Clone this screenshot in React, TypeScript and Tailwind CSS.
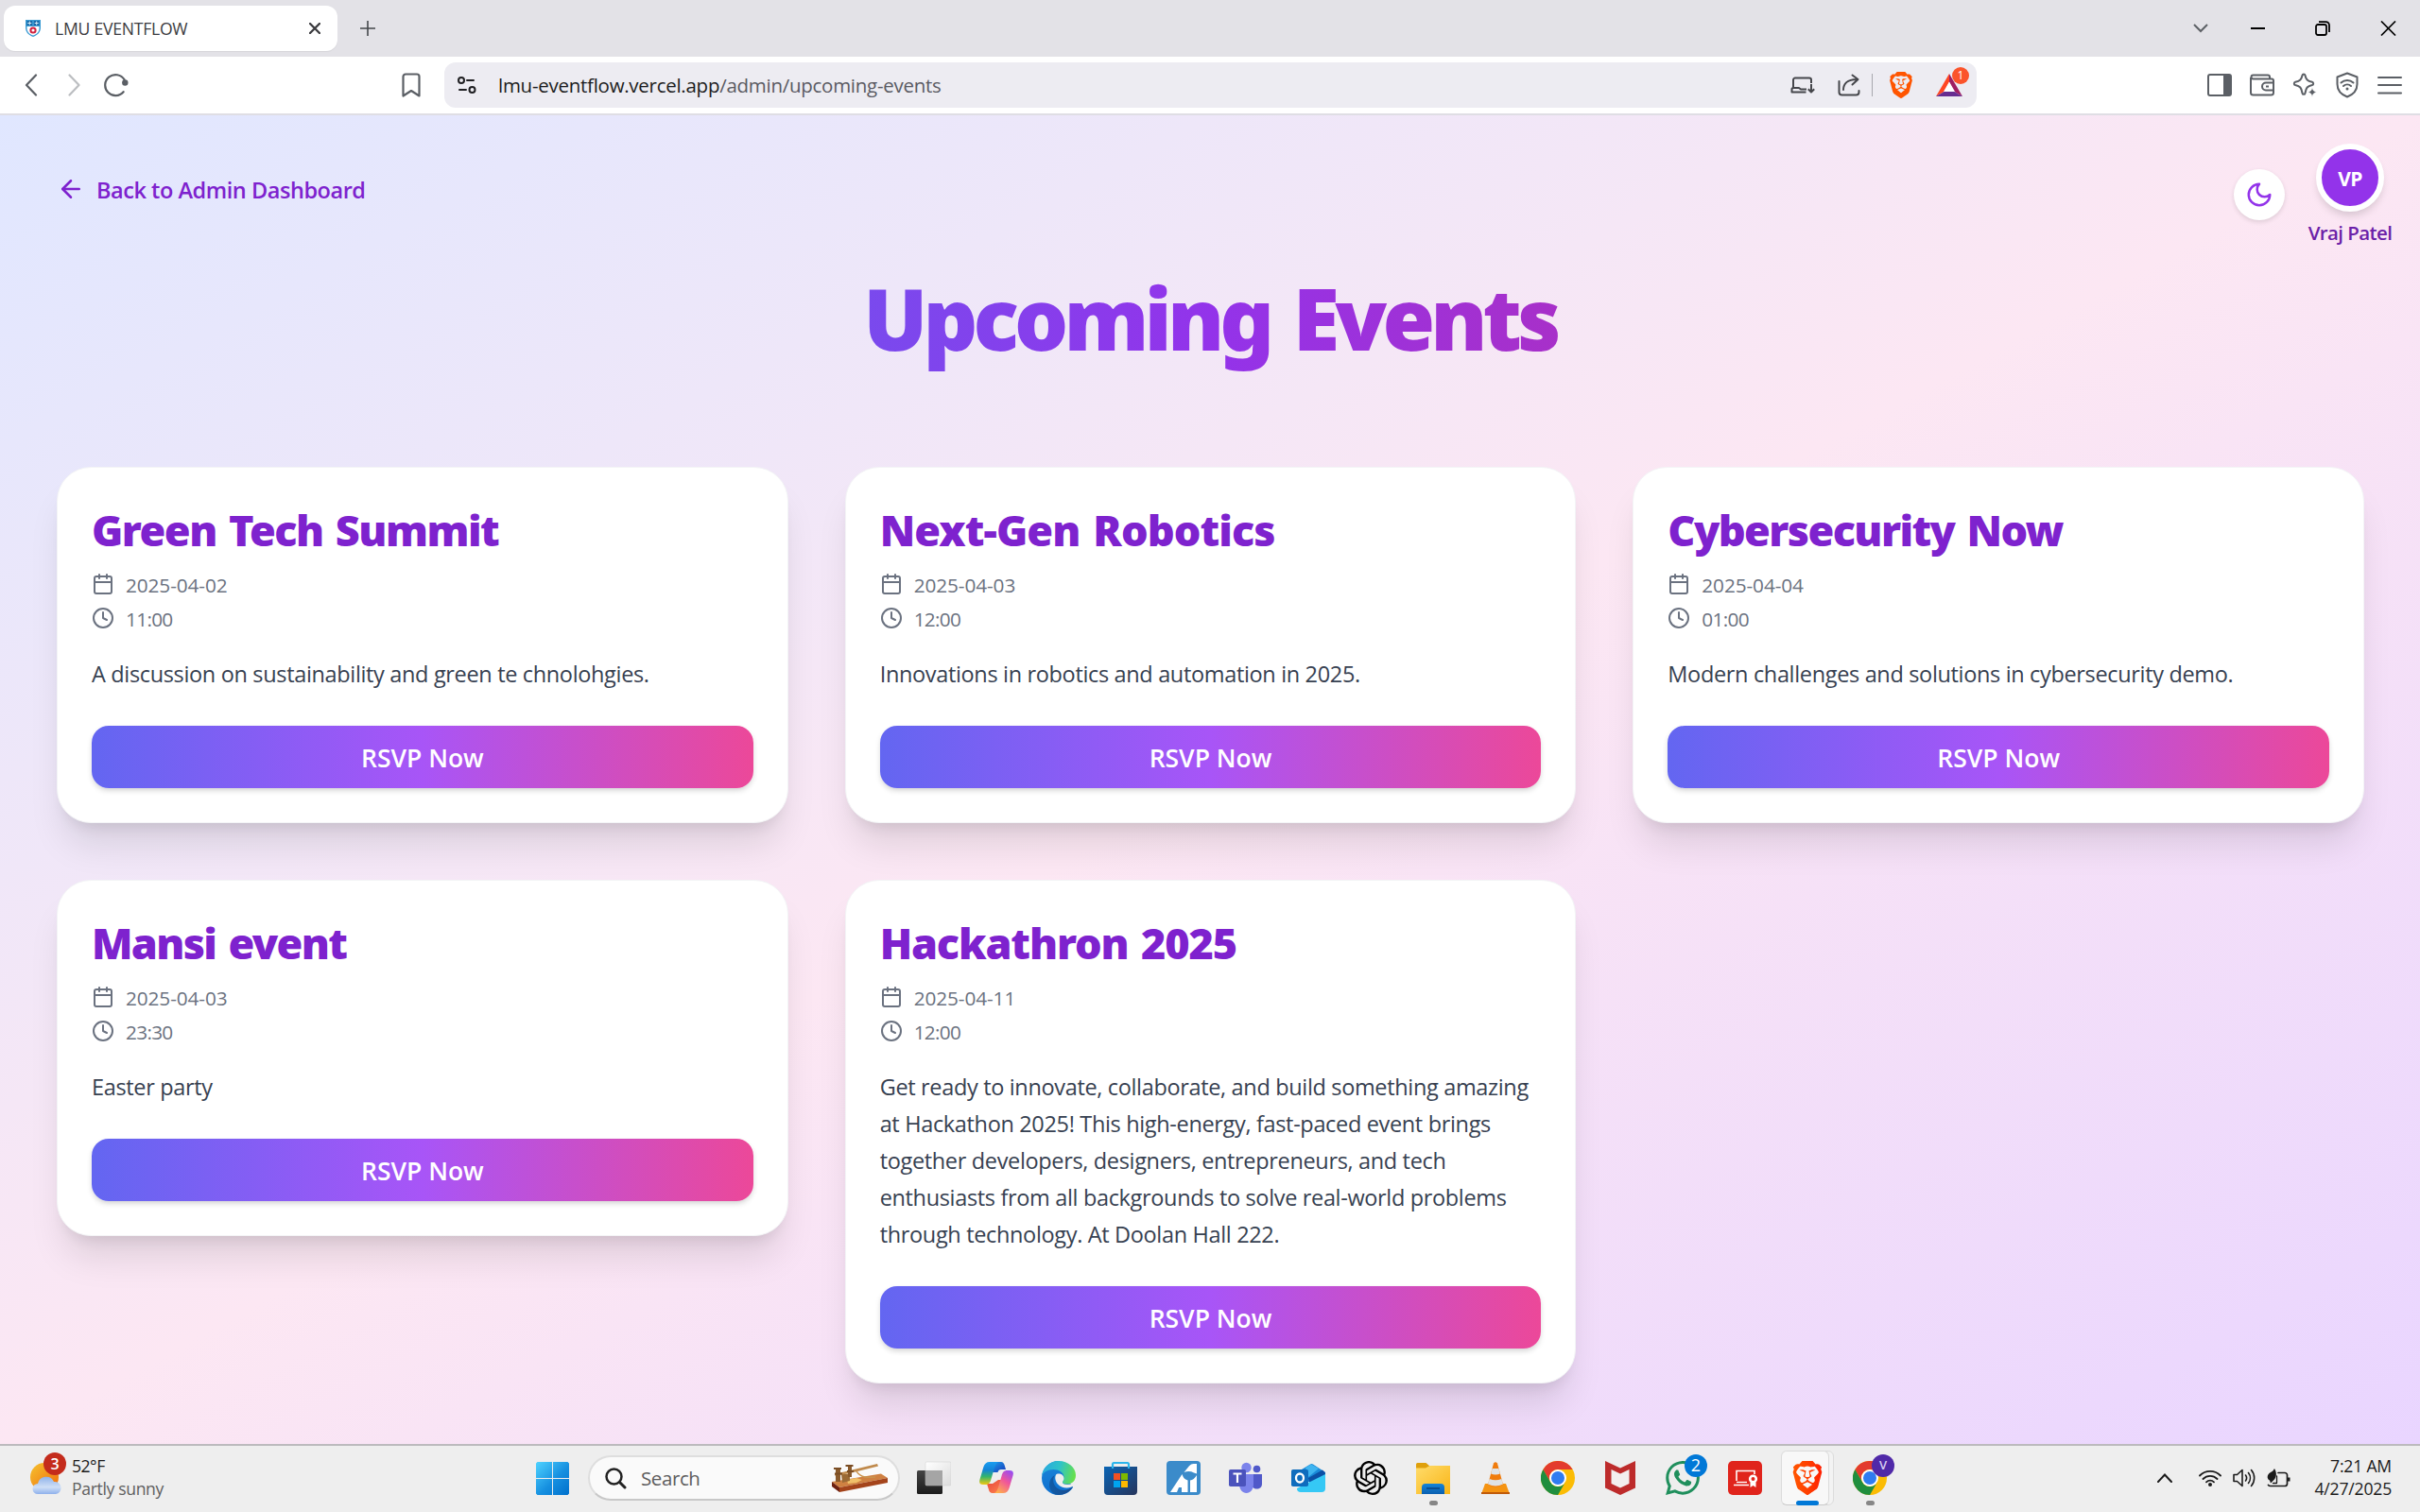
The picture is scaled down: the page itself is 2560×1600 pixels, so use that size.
import type { ReactNode } from "react";
import { ArrowLeft, Calendar, Clock } from "lucide-react";
import { SiBrave, SiOpenai, SiWhatsapp } from "react-icons/si";

type EventItem = {
  title: string;
  date: string;
  time: string;
  description: string;
  tracking: string;
};

const events: EventItem[] = [
  { title: "Green Tech Summit", date: "2025-04-02", time: "11:00", description: "A discussion on sustainability and green te chnolohgies.", tracking: "tracking-[-1.5px]" },
  { title: "Next-Gen Robotics", date: "2025-04-03", time: "12:00", description: "Innovations in robotics and automation in 2025.", tracking: "tracking-[-0.9px]" },
  { title: "Cybersecurity Now", date: "2025-04-04", time: "01:00", description: "Modern challenges and solutions in cybersecurity demo.", tracking: "tracking-[-1.6px]" },
  { title: "Mansi event", date: "2025-04-03", time: "23:30", description: "Easter party", tracking: "tracking-[-1.65px]" },
  { title: "Hackathron 2025", date: "2025-04-11", time: "12:00", description: "Get ready to innovate, collaborate, and build something amazing at Hackathon 2025! This high-energy, fast-paced event brings together developers, designers, entrepreneurs, and tech enthusiasts from all backgrounds to solve real-world problems through technology. At Doolan Hall 222.", tracking: "tracking-[-1.15px]" },
];

/* ---------- Browser chrome ---------- */

function TabStrip() {
  return (
    <div className="flex h-[60px] items-center bg-[#e3e2e7] pl-1">
      <div className="flex h-12 w-[353px] items-center rounded-xl bg-white pl-[23px] pr-[18px] shadow-[0_1px_1px_rgba(0,0,0,0.06)]">
        <svg width="16" height="18" viewBox="0 0 16 18">
          <path d="M0 0h16v8c0 5-3 8-8 10C3 16 0 13 0 8z" fill="#3a9bd3" />
          <path d="M1.500 7h13v1.500c0 4-2.500 6.500-6.500 8.100C4 15 1.500 12.500 1.500 8.500z" fill="#fff" />
          <path d="M1.500 1h5.600v5H1.500zM8.900 1h5.600v5H8.900z" fill="#1668a8" />
          <path d="M4.300 1.500v4M2.300 3.500h4M11.700 1.500v4M9.700 3.500h4" stroke="#d7ecf8" strokeWidth="1" />
          <circle cx="8" cy="11" r="2.600" fill="none" stroke="#d0213f" strokeWidth="2" />
        </svg>
        <span className="ml-[15px] grow text-[17.600px] tracking-[-0.25px] text-[#3b3b40]">LMU EVENTFLOW</span>
        <svg width="12" height="12" viewBox="0 0 12 12" stroke="#3b3b3f" strokeWidth="2.300" strokeLinecap="round">
          <path d="M1 1l10 10M11 1L1 11" />
        </svg>
      </div>
      <svg className="ml-6" width="16" height="16" viewBox="0 0 16 16" stroke="#44474b" strokeWidth="1.600">
        <path d="M8 0v16M0 8h16" />
      </svg>
      <div className="ml-auto flex items-center pr-[25px]">
        <svg width="16" height="10" viewBox="0 0 16 10" fill="none" stroke="#5d6166" strokeWidth="2">
          <path d="M1 1l7 7 7-7" />
        </svg>
        <svg className="ml-[45px]" width="15" height="2" viewBox="0 0 15 2"><path d="M0 0h15v2H0z" /></svg>
        <svg className="ml-[53px]" width="16" height="16" viewBox="0 0 16 16" fill="none" stroke="#000" strokeWidth="1.800">
          <rect x="1" y="4" width="11" height="11" rx="2" />
          <path d="M4 1.200h7.500A3.500 3.500 0 0 1 15 4.700V12" />
        </svg>
        <svg className="ml-[53px]" width="17" height="16" viewBox="0 0 17 16" stroke="#000" strokeWidth="1.700">
          <path d="M1 .5l15 15M16 .5L1 15.500" />
        </svg>
      </div>
    </div>
  );
}

function BatIcon() {
  return (
    <span className="relative block h-6 w-7">
      <svg width="28" height="24" viewBox="0 0 28 24">
        <path d="M14 0L0 24l8.500-5L14 9z" fill="#ff4724" />
        <path d="M14 0l14 24-8.500-5L14 9z" fill="#9e1f63" />
        <path d="M0 24h28l-8.500-5h-11z" fill="#662d91" />
        <path d="M14 8.500l6 10.500H8z" fill="#fff" />
      </svg>
      <span className="absolute -top-[7px] left-[17px] flex size-[18px] items-center justify-center rounded-full bg-[#fb542b] text-[12px] text-white">1</span>
    </span>
  );
}

function Toolbar() {
  return (
    <div className="flex h-[62px] items-center border-b-2 border-[#dfdee4] bg-white pl-[26px] pr-[19px]">
      <svg width="14" height="24" viewBox="0 0 14 24" fill="none" stroke="#5b5f65" strokeWidth="2.200" strokeLinecap="round" strokeLinejoin="round">
        <path d="M12 1.500L2 12l10 10.500" />
      </svg>
      <svg className="ml-8" width="14" height="24" viewBox="0 0 14 24" fill="none" stroke="#bcbec1" strokeWidth="2.200" strokeLinecap="round" strokeLinejoin="round">
        <path d="M1.500 1.500L11.500 12l-10 10.500" />
      </svg>
      <svg className="ml-6" width="26" height="26" viewBox="0 0 26 26" fill="none" stroke="#5b5f65" strokeWidth="2.200" strokeLinecap="round">
        <path d="M20.600 20.200A11 11 0 1 1 21.500 7.200" />
        <circle cx="22.300" cy="10.500" r="3.200" fill="#5b5f65" stroke="none" />
      </svg>
      <svg className="ml-[289px]" width="20" height="26" viewBox="0 0 20 26" fill="none" stroke="#5b5f65" strokeWidth="2.200" strokeLinejoin="round">
        <path d="M1.500 4a2.500 2.500 0 0 1 2.500-2.500h12A2.500 2.500 0 0 1 18.500 4v20.500L10 19l-8.500 5.500z" />
      </svg>
      <div className="ml-[25px] flex h-12 w-[1621px] items-center rounded-xl bg-[#edecf2] pl-[14px] pr-[15px]">
        <svg width="20" height="18" viewBox="0 0 20 18" fill="none" stroke="#1f1f22" strokeWidth="2" strokeLinecap="round">
          <circle cx="4" cy="4" r="3" />
          <path d="M10 4h7M2 14h7" />
          <circle cx="15.500" cy="14" r="3" />
        </svg>
        <span className="ml-[23px] pt-px text-[20.500px] tracking-[-0.27px] text-[#5a5a62]">
          <span className="text-[#1c1c20]">lmu-eventflow.vercel.app</span>/admin/upcoming-events
        </span>
        <svg className="ml-auto" width="26" height="18" viewBox="0 0 26 18" fill="none" stroke="#45464b" strokeWidth="2" strokeLinejoin="round">
          <path d="M22 7V3.500A2 2 0 0 0 20 1.500H5a2 2 0 0 0-2 2V12M3 11.500L1.500 13v3.500h15M3 12h6l2 1.500h6" />
          <path d="M22 8v8.500M18.800 13.300L22 16.500l3.200-3.200" />
        </svg>
        <svg className="ml-6" width="24" height="24" viewBox="0 0 24 24" fill="none" stroke="#45464b" strokeWidth="2" strokeLinecap="round" strokeLinejoin="round">
          <path d="M1.500 8v11.500a3 3 0 0 0 3 3h15a3 3 0 0 0 3-3V18" />
          <path d="M6 17c0-6 4-11 14-11M15.500 1.500L21.500 6l-6 5.500" />
        </svg>
        <span className="ml-3 h-6 w-px bg-[#a7a8ad]" />
        <SiBrave className="ml-4 text-[#ff5500]" size={28} />
        <span className="ml-[23px]"><BatIcon /></span>
      </div>
      <div className="ml-auto flex items-center gap-[19px]">
        <svg width="26" height="24" viewBox="0 0 26 24">
          <rect x="1" y="1" width="24" height="22" rx="2" fill="none" stroke="#5b5f65" strokeWidth="2" />
          <path d="M17 1h7v22h-7z" fill="#5b5f65" />
        </svg>
        <svg width="26" height="24" viewBox="0 0 26 24" fill="none" stroke="#5b5f65" strokeWidth="2">
          <path d="M25 8.500V20a2.500 2.500 0 0 1-2.500 2.500h-19A2.500 2.500 0 0 1 1 20V4M25 9V7.500A2 2 0 0 0 23 5.500H3.500A2 2 0 0 1 3.500 1.500H19a2 2 0 0 1 2 2v2" />
          <path d="M25 9.500h-8a4 4 0 0 0 0 8h8zM17 13.500h3" />
        </svg>
        <svg width="26" height="26" viewBox="0 0 26 26" fill="none" stroke="#5b5f65" strokeWidth="2" strokeLinejoin="round">
          <path d="M12 1.500c.8 0 1.300.5 1.500 1.300.9 4.300 2.400 5.800 7.400 7 1.700.5 1.700 2.700 0 3.200-5 1.200-6.500 2.700-7.400 8.500-.3 1.800-2.700 1.800-3 0-.9-5.800-2.400-7.300-7.400-8.500-1.700-.5-1.700-2.700 0-3.200 5-1.200 6.500-2.700 7.400-7C10.700 2 11.200 1.500 12 1.500z" />
          <path d="M21 15.500c.8 3.400 1.600 4.200 5 5-3.400.8-4.200 1.600-5 5-.8-3.400-1.600-4.200-5-5 3.400-.8 4.200-1.600 5-5z" fill="#5b5f65" stroke="#fff" strokeWidth=".6" />
        </svg>
        <svg width="26" height="28" viewBox="0 0 26 28" fill="none" stroke="#5b5f65" strokeWidth="2" strokeLinecap="round" strokeLinejoin="round">
          <path d="M13 1.500L23.500 5.500V13c0 6.500-4 11-10.500 13.500C6.500 24 2.500 19.500 2.500 13V5.500z" />
          <path d="M6.500 11.500a9.500 9.500 0 0 1 13 0M9 15a6 6 0 0 1 8 0" />
          <circle cx="13" cy="18" r="1.500" fill="#5b5f65" stroke="none" />
        </svg>
        <svg width="26" height="20" viewBox="0 0 26 20" stroke="#5b5f65" strokeWidth="2" strokeLinecap="round">
          <path d="M1 2h24M1 10h24M1 18.500h24" />
        </svg>
      </div>
    </div>
  );
}

/* ---------- Page ---------- */

function PageHeader() {
  return (
    <header className="flex h-[152px] items-start pl-[60px] pr-[29px] pt-[30px] text-[#7e22ce]">
      <a className="mt-[30px] flex h-9 items-center gap-3">
        <ArrowLeft size={30} strokeWidth={2} />
        <span className="pt-[3px] text-[23.500px] font-semibold tracking-[-0.45px]">Back to Admin Dashboard</span>
      </a>
      <div className="ml-auto flex items-start gap-6">
        <button className="mt-[27px] flex size-[54px] items-center justify-center rounded-full bg-white text-[#9333ea] shadow-[0_2px_5px_rgba(0,0,0,0.12)]">
          <svg width="30" height="30" viewBox="0 0 24 24" fill="none" stroke="currentColor" strokeWidth="2" strokeLinecap="round" strokeLinejoin="round">
            <path d="M12 3a6 6 0 0 0 9 9 9 9 0 1 1-9-9Z" />
          </svg>
        </button>
        <div className="flex w-[90px] flex-col items-center">
          <div className="flex size-[72px] items-center justify-center rounded-full border-[6px] border-white bg-[#9333ea] pt-[3px] text-[21px] font-bold tracking-[-0.6px] text-white shadow-[0_6px_9px_-2px_rgba(0,0,0,0.15)]">VP</div>
          <span className="mt-[7px] whitespace-nowrap text-[20.500px] font-semibold leading-[30px] tracking-[-0.6px] text-[#6b21a8]">Vraj Patel</span>
        </div>
      </div>
    </header>
  );
}

function EventCard({ event }: { event: EventItem }) {
  return (
    <article className="rounded-[36px] border border-[#f3f4f6] bg-white p-9 shadow-[0_30px_37.500px_-7.500px_rgba(0,0,0,0.1),0_12px_15px_-9px_rgba(0,0,0,0.1)]">
      <h2 className={`h-[54px] pt-[3px] font-['Noto_Sans',sans-serif] text-[45px] font-black leading-[54px] text-[#7e22ce] [word-spacing:3px] ${event.tracking}`}>{event.title}</h2>
      <div className="mt-[18px] flex h-[30px] items-center gap-3 text-[#6b7280]">
        <Calendar size={24} />
        <span className="pt-[3px] text-[20.800px] tracking-[-0.1px]">{event.date}</span>
      </div>
      <div className="mt-1.5 flex h-[30px] items-center gap-3 text-[#6b7280]">
        <Clock size={24} />
        <span className="pt-[3px] text-[20.800px] tracking-[-0.7px]">{event.time}</span>
      </div>
      <p className="mt-[25px] text-[23.500px] leading-[39px] tracking-[-0.34px] text-[#374151]">{event.description}</p>
      <button className="mt-[35px] h-[66px] w-full rounded-[18px] bg-[linear-gradient(to_right,#6366f1,#a855f7,#ec4899)] pt-[3px] text-[26.500px] font-semibold text-white shadow-[0_3px_6px_-1px_rgba(0,0,0,0.2)]">RSVP Now</button>
    </article>
  );
}

/* ---------- Taskbar ---------- */

const appSvg = { width: 36, height: 36, viewBox: "0 0 36 36", className: "block" };

function StartIcon() {
  return (
    <svg width="35" height="35" viewBox="0 0 35 35">
      <defs>
        <linearGradient id="win" x1="0" y1="0" x2="35" y2="35" gradientUnits="userSpaceOnUse">
          <stop stopColor="#4fd3ff" />
          <stop offset=".55" stopColor="#1690e0" />
          <stop offset="1" stopColor="#0070cc" />
        </linearGradient>
      </defs>
      <path fill="url(#win)" d="M1.500 0H17v17H0V1.500zM18 0h15.500L35 1.500V17H18zM0 18h17v17H1.500L0 33.500zM18 18h17v15.500L33.500 35H18z" />
    </svg>
  );
}

function TelegraphPicture() {
  return (
    <svg width="60" height="30" viewBox="0 0 60 30">
      <path d="M0 19L52 10.500l7 4.500-51 10z" fill="#cf8142" />
      <path d="M16 17l10-2 6 2-6 3-9 1z" fill="#f0c069" />
      <path d="M0 19l8 6v5l-8-6z" fill="#6e2010" />
      <path d="M8 25l51-10v5L8 30z" fill="#a4441b" />
      <path d="M10 11h9v7l-8 2z" fill="#9b6a35" />
      <path d="M3 10.500l10-2L48 0l1 2.500-32 8-14 2z" fill="#c08a4c" />
      <path d="M4 5h5v14H4zM17 2h4v12h-4z" fill="#8a5a2c" />
      <path d="M2 5h8M14.500 2h8M3 10.500h8M16 8h7" stroke="#7a4d24" strokeWidth="2" />
      <path d="M26 8c5 7 12 7 20 6" fill="none" stroke="#c9944f" strokeWidth="1.300" />
    </svg>
  );
}

function TaskViewIcon() {
  return (
    <svg {...appSvg}>
      <defs>
        <linearGradient id="tv1" x1="0" y1="0" x2="0" y2="1"><stop stopColor="#444" /><stop offset="1" stopColor="#1c1c1c" /></linearGradient>
        <linearGradient id="tv2" x1="0" y1="0" x2="1" y2="1"><stop stopColor="#fff" /><stop offset="1" stopColor="#dcdcdc" /></linearGradient>
      </defs>
      <rect x="0" y="10" width="27" height="25" rx="1.500" fill="url(#tv1)" />
      <rect x="9" y="1" width="27" height="25" rx="1.500" fill="url(#tv2)" stroke="#cfcfcf" strokeWidth=".5" />
      <path d="M9 10h18v16H9z" fill="#a5a5a5" />
    </svg>
  );
}

function CopilotIcon() {
  return (
    <svg {...appSvg}>
      <defs>
        <linearGradient id="cp1" x1="0" y1="0" x2="0" y2="1"><stop stopColor="#1a9df0" /><stop offset=".35" stopColor="#1284d8" /><stop offset=".65" stopColor="#35b56a" /><stop offset="1" stopColor="#f2c80f" /></linearGradient>
        <linearGradient id="cp2" x1=".8" y1="0" x2=".2" y2="1"><stop stopColor="#9a4df0" /><stop offset=".45" stopColor="#f0569a" /><stop offset="1" stopColor="#ffb04a" /></linearGradient>
        <linearGradient id="cp3" x1="0" y1="0" x2="1" y2="1"><stop stopColor="#20a4ee" /><stop offset="1" stopColor="#1436b8" /></linearGradient>
        <linearGradient id="cp4" x1="0" y1="0" x2="1" y2="1"><stop stopColor="#e8453c" /><stop offset="1" stopColor="#ff8a50" /></linearGradient>
      </defs>
      <path d="M12 1h11c2 0 3 1.500 3.500 3l1.500 5h-5c-2 0-3 1-3.500 3L13 12z" fill="url(#cp3)" />
      <path d="M24 34H14c-2.500 0-3.500-1.500-4-3.500L8 24h6l6-4h8z" fill="url(#cp4)" />
      <path d="M11 1h9c-2 1-3 3-4 6l-3.500 12c-1 4-2.500 6-6 6H4c-3.500 0-4.500-2-3.500-5.500L4.500 6c1-3 3-5 6.500-5z" fill="url(#cp1)" />
      <path d="M25 34h-9c2-1 3-3 4-6l3.500-12c1-4 2.500-6 6-6H32c3.500 0 4.500 2 3.500 5.500L31.500 29c-1 3-3 5-6.500 5z" fill="url(#cp2)" />
    </svg>
  );
}

function EdgeIcon() {
  return (
    <svg {...appSvg}>
      <defs>
        <linearGradient id="ed1" x1="0" y1=".3" x2="1" y2=".5"><stop stopColor="#2aa9e0" /><stop offset=".5" stopColor="#2fc3c8" /><stop offset="1" stopColor="#66e04a" /></linearGradient>
        <linearGradient id="ed2" x1="0" y1="0" x2="0" y2="1"><stop stopColor="#1b86d8" /><stop offset="1" stopColor="#0d6fd0" /></linearGradient>
        <linearGradient id="ed3" x1="0" y1="0" x2="1" y2="0"><stop stopColor="#0f5ca8" /><stop offset="1" stopColor="#1b4a8c" /></linearGradient>
      </defs>
      <path d="M18 0a18 18 0 1 0 0 36c6 0 12-3 15-8L24 14z" fill="url(#ed2)" />
      <path d="M0 16C1 7 8 0 18 0s18 7 18 15c0 6-4 9.500-9 9.500-4 0-5-1.500-5-2.500 0-1.200 1.500-1.800 1.500-4.500C23.500 12 18 9 12.500 9 6 9 1.500 12 0 16z" fill="url(#ed1)" />
      <path d="M14 15c-3 4-2 10 2 13.500 5 4 12 3 17-1.500-3 5.500-8.500 9-15 9-6 0-10-5-10-10.500 0-5 2.500-9 6-10.500z" fill="url(#ed3)" />
      <path d="M15.500 14c4.500-1.500 8 1 8 4.500 0 2-1.500 2.500-1.500 4s1.500 2.500 5 2.500c3 0 5.500-1 7-2 .3 1-1 4-2.500 4.500-5 2-11 1-14.500-3-3-3.500-3.500-8-1.500-10.500z" fill="#eee" />
    </svg>
  );
}

function StoreIcon() {
  return (
    <svg {...appSvg}>
      <defs>
        <linearGradient id="st" x1="0" y1="0" x2="1" y2="1"><stop stopColor="#0a64b4" /><stop offset="1" stopColor="#26355c" /></linearGradient>
      </defs>
      <path d="M0 6h35v26a4 4 0 0 1-4 4H4a4 4 0 0 1-4-4z" fill="url(#st)" />
      <path d="M9 8V4A1.800 1.800 0 0 1 10.500 2h14a1.800 1.800 0 0 1 1.500 2v4" fill="none" stroke="#2cb5ec" strokeWidth="2.200" />
      <path d="M10 13h7v7h-7z" fill="#f25022" />
      <path d="M18 13h7v7h-7z" fill="#7fba00" />
      <path d="M10 21h7v7h-7z" fill="#00a4ef" />
      <path d="M18 21h7v7h-7z" fill="#ffb900" />
    </svg>
  );
}

function AiIcon() {
  return (
    <svg {...appSvg}>
      <rect width="36" height="36" rx="4" fill="#3b8bca" />
      <path d="M4 33L16.500 14c1 3.500 2.500 5.500 6 6.500V33h-6.500v-5h-3L11 33z" fill="#fff" />
      <path d="M18.500 12L24 5.200Q26 3 28.500 3H32v10.500l-3-1q-5-2.500-10.500-.5z" fill="#fff" />
      <path d="M25 20.500q4-.5 7-5.500v18h-7z" fill="#fff" />
    </svg>
  );
}

function TeamsIcon() {
  return (
    <svg {...appSvg}>
      <circle cx="18.500" cy="7" r="5.200" fill="#7b83eb" />
      <circle cx="29.500" cy="8.500" r="3.800" fill="#5059c9" />
      <path d="M24 14h11v10c0 4-2.500 5.500-5.500 5.500S24 28 24 24z" fill="#5059c9" />
      <path d="M11 14h15v11c0 5-3.500 9-7.500 9S11 30 11 25z" fill="#7b83eb" />
      <rect x="0" y="9" width="18" height="18" rx="1.800" fill="#4b53bc" />
      <path d="M4.500 13.500h9M9 13.500V23" stroke="#fff" strokeWidth="2.200" />
    </svg>
  );
}

function OutlookIcon() {
  return (
    <svg {...appSvg}>
      <path d="M6 12L20 3.500q1.500-.8 3 0l13 8.500v6L6 25z" fill="#1a8ad8" />
      <path d="M15 7l6-3.500L29 8l-11 9z" fill="#3fb4f0" />
      <path d="M18 18L33 9.500l3 3v3L20 26z" fill="#0b4fa5" />
      <path d="M36 14v15a4 4 0 0 1-4 4H10a4 4 0 0 1-4-4l12-6z" fill="#35c8f5" />
      <rect x="0" y="9" width="18" height="18" rx="1.800" fill="#0f6cbd" />
      <ellipse cx="9" cy="18" rx="4" ry="4.500" fill="none" stroke="#fff" strokeWidth="2.300" />
    </svg>
  );
}

function ExplorerIcon() {
  return (
    <svg {...appSvg}>
      <defs>
        <linearGradient id="fx" x1="0" y1="0" x2="1" y2="1"><stop stopColor="#ffdc6b" /><stop offset="1" stopColor="#f9b517" /></linearGradient>
        <linearGradient id="fb" x1="0" y1="0" x2="0" y2="1"><stop stopColor="#1584d8" /><stop offset="1" stopColor="#0a5fb0" /></linearGradient>
      </defs>
      <path d="M0 3.500A1.500 1.500 0 0 1 1.500 2h9l4 3.500L10 9H0z" fill="#dfa00c" />
      <path d="M0 7.500h10L14.500 5H36v30H0z" fill="url(#fx)" />
      <path d="M6 35v-7a4 4 0 0 1 4-4h16a4 4 0 0 1 4 4v7z" fill="url(#fb)" />
      <path d="M11 29h14" stroke="#0b4a8c" strokeWidth="1.800" />
    </svg>
  );
}

function VlcIcon() {
  return (
    <svg {...appSvg}>
      <path d="M7 24h22l4 11H3z" fill="#f59412" />
      <path d="M3 33h30v2H3z" fill="#c05a08" />
      <path d="M16 2.500q2-2.500 4 0L26 25q-8 5-16 0z" fill="#f07c0c" />
      <path d="M14.600 8h6.800l1.500 5.500q-4.900 2-9.800 0zM11.600 19q6.400 2.500 12.800 0l1.600 5.500q-8 4-16 0z" fill="#dfe3e6" />
    </svg>
  );
}

function ChromeIcon() {
  return (
    <svg {...appSvg}>
      <circle cx="18" cy="18" r="18" fill="#fbbc04" />
      <path d="M2.400 9A18 18 0 0 1 33.600 9H18a9 9 0 0 0-7.800 13.500z" fill="#e33b2e" />
      <path d="M2.400 9A18 18 0 0 0 18 36l7.800-13.500a9 9 0 0 1-15.600 0z" fill="#1f8e3e" />
      <circle cx="18" cy="18" r="9" fill="#fff" />
      <circle cx="18" cy="18" r="7" fill="#2f7cf0" />
    </svg>
  );
}

function McAfeeIcon() {
  return (
    <svg {...appSvg}>
      <path d="M2 0l16 7.500L34 0v28.500L18 36 2 28.500z" fill="#bd2b2b" />
      <path d="M8.500 9l9.500 4.500L27.500 9v15L18 28.500 8.500 24z" fill="#f3eeee" />
    </svg>
  );
}

function WhatsAppIcon() {
  return (
    <span className="relative block size-9">
      <SiWhatsapp size={36} className="text-[#1f8f5c]" />
      <span className="absolute -top-[7px] left-5 flex size-6 items-center justify-center rounded-full bg-[#0078d7] pb-px text-[18px] text-white">2</span>
    </span>
  );
}

function CertificateIcon() {
  return (
    <svg {...appSvg} fill="none">
      <rect width="36" height="36" rx="5" fill="#e0241c" />
      <path d="M9 21V10.500h19V14M6 25.500h16" stroke="#fff" strokeWidth="1.600" />
      <path d="M9 22.500h11" stroke="#fff" strokeWidth="1.400" />
      <circle cx="26.500" cy="19" r="3.300" stroke="#fff" strokeWidth="2.600" />
      <path d="M23.500 22.500h6V28l-3-2-3 2z" fill="#fff" />
    </svg>
  );
}

function BraveIcon() {
  return (
    <span className="relative -mx-[13px] block h-[58px] w-[62px]">
      <span className="absolute left-[9px] top-0 block h-[58px] w-[50px] rounded-[6px] border border-[#dcdcdc] bg-[#f3f3f3]" />
      <span className="absolute left-[3px] top-0 flex h-[58px] w-[51px] items-center justify-center rounded-[6px] border border-[#dcdcdc] border-b-[#c9c9c9] bg-[#f8f8f8] pl-[5px]">
        <svg width="0" height="0" className="absolute">
          <defs>
            <linearGradient id="brv" x1="0" y1="0" x2="1" y2="0"><stop stopColor="#ff5601" /><stop offset=".5" stopColor="#ff4000" /><stop offset="1" stopColor="#ff1f01" /></linearGradient>
          </defs>
        </svg>
        <SiBrave size={36} fill="url(#brv)" />
      </span>
    </span>
  );
}

function ProfileChromeIcon() {
  return (
    <span className="relative block size-9">
      <ChromeIcon />
      <span className="absolute -top-[7px] left-5 flex size-6 items-center justify-center rounded-full bg-[#5029a8] text-[13px] font-semibold text-[#d9cdf2]">V</span>
    </span>
  );
}

const apps: { name: string; icon: ReactNode; mark?: "open" | "active" }[] = [
  { name: "task-view", icon: <TaskViewIcon /> },
  { name: "copilot", icon: <CopilotIcon /> },
  { name: "edge", icon: <EdgeIcon /> },
  { name: "store", icon: <StoreIcon /> },
  { name: "ai", icon: <AiIcon /> },
  { name: "teams", icon: <TeamsIcon /> },
  { name: "outlook", icon: <OutlookIcon /> },
  { name: "chatgpt", icon: <SiOpenai size={36} color="#000" /> },
  { name: "explorer", icon: <ExplorerIcon />, mark: "open" },
  { name: "vlc", icon: <VlcIcon /> },
  { name: "chrome", icon: <ChromeIcon /> },
  { name: "mcafee", icon: <McAfeeIcon /> },
  { name: "whatsapp", icon: <WhatsAppIcon /> },
  { name: "certificate", icon: <CertificateIcon /> },
  { name: "brave", icon: <BraveIcon />, mark: "active" },
  { name: "chrome-profile", icon: <ProfileChromeIcon />, mark: "open" },
];

function Taskbar() {
  return (
    <footer className="flex h-[72px] items-center border-t-2 border-[#bcbabd] bg-[#eeeeee] pb-0.5 pl-8 pr-[30px] text-[17.600px] text-[#1b1b1b]">
      <div className="flex w-[535px] items-center">
        <span className="relative block h-11 w-9">
          <svg width="36" height="44" viewBox="0 0 36 44">
            <defs>
              <linearGradient id="sun" x1="0" y1="0" x2="1" y2="1"><stop stopColor="#f5c22f" /><stop offset="1" stopColor="#f06a0a" /></linearGradient>
              <linearGradient id="cloud" x1="0" y1="0" x2="0" y2="1"><stop stopColor="#8fb2ea" /><stop offset=".6" stopColor="#cfdff6" /><stop offset="1" stopColor="#8eb0ec" /></linearGradient>
            </defs>
            <circle cx="15" cy="21" r="15" fill="url(#sun)" />
            <path d="M8 39a5.500 5.500 0 0 1 0-11 9 9 0 0 1 17-2 6.500 6.500 0 0 1 2 13z" fill="url(#cloud)" />
          </svg>
          <span className="absolute -top-[5px] left-3.5 flex size-6 items-center justify-center rounded-full bg-[#c42b1c] text-[16px] font-semibold text-white">3</span>
        </span>
        <div className="ml-2 flex flex-col pb-0.5 leading-6">
          <span className="tracking-[-0.5px]">52°F</span>
          <span className="tracking-[-0.35px] text-[#5f5f5f]">Partly sunny</span>
        </div>
      </div>
      <StartIcon />
      <div className="ml-5 flex h-12 w-[330px] items-center rounded-full border-2 border-[#dedede] border-b-[#c8c8c8] bg-[#fafafa] pl-4 pr-[10px]">
        <svg width="23" height="23" viewBox="0 0 23 23" fill="none" stroke="#222" strokeWidth="2.500" strokeLinecap="round">
          <circle cx="9.500" cy="9.500" r="8" />
          <path d="M15.500 15.500l5.500 5.500" strokeWidth="3" />
        </svg>
        <span className="ml-[15px] grow text-[20.500px] tracking-[-0.4px] text-[#5d5d5d]">Search</span>
        <TelegraphPicture />
      </div>
      <div className="ml-[18px] flex items-center gap-[30px]">
        {apps.map((app) => (
          <div key={app.name} className="relative flex h-[68px] w-9 items-center justify-center">
            {app.icon}
            {app.mark === "open" && <span className="absolute bottom-[5px] left-[13.500px] h-[5px] w-[9px] rounded-full bg-[#868686]" />}
            {app.mark === "active" && <span className="absolute bottom-[5px] left-1.5 h-[5px] w-6 rounded-full bg-[#0078d7]" />}
          </div>
        ))}
      </div>
      <div className="ml-auto flex items-center">
        <svg width="16" height="10" viewBox="0 0 16 10" fill="none" stroke="#1b1b1b" strokeWidth="2" strokeLinecap="round">
          <path d="M1 9l7-7.500L15 9" />
        </svg>
        <svg className="ml-7" width="24" height="18" viewBox="0 0 24 18" fill="none" stroke="#1b1b1b" strokeWidth="1.800" strokeLinecap="round">
          <path d="M1 6.500a15.500 15.500 0 0 1 22 0M4.500 10a10.500 10.500 0 0 1 15 0M8 13.300a5.800 5.800 0 0 1 8 0" />
          <circle cx="12" cy="16" r="2" fill="#1b1b1b" stroke="none" />
        </svg>
        <svg className="ml-3" width="24" height="20" viewBox="0 0 24 20" fill="none" stroke="#1b1b1b" strokeWidth="1.600" strokeLinecap="round" strokeLinejoin="round">
          <path d="M1 6.500h3.500L10 1.500v17l-5.500-5H1zM13.500 7a5 5 0 0 1 0 6M16.500 4.500a9 9 0 0 1 0 11M19.500 1.500a13 13 0 0 1 0 17" />
        </svg>
        <svg className="ml-3" width="25" height="20" viewBox="0 0 25 20" fill="none" stroke="#1b1b1b" strokeWidth="1.700" strokeLinecap="round">
          <path d="M12 4.500h7a2.500 2.500 0 0 1 2.500 2.500v9a2.500 2.500 0 0 1-2.500 2.500H4a3 3 0 0 1-2.500-1" />
          <path d="M22 9.500h2.500v4H22z" fill="#1b1b1b" stroke="none" />
          <path d="M8 0c2.500 4 2.500 8 0 11.500L4 15.500l-1-3C-.5 11 0 6 4 4c2-1 3-2 4-4z" fill="#1b1b1b" stroke="none" />
          <path d="M10.500 8v7M6.500 15.500h4" strokeWidth="1.300" />
        </svg>
        <div className="ml-[25px] flex w-[82px] flex-col items-end whitespace-nowrap pb-0.5 leading-6">
          <span className="tracking-[-0.2px]">7:21 AM</span>
          <span className="tracking-[-0.2px]">4/27/2025</span>
        </div>
      </div>
    </footer>
  );
}

export default function App() {
  return (
    <div className="flex h-[1600px] w-[2560px] flex-col overflow-hidden font-['Open_Sans',sans-serif]">
      <TabStrip />
      <Toolbar />
      <main className="h-[1406px] overflow-hidden bg-[linear-gradient(to_bottom_right,#e0e7ff,#fce7f3,#e9d5ff)]">
        <PageHeader />
        <h1 className="mb-[98px] bg-[linear-gradient(to_right,#3b82f6,#9333ea,#db2777)] bg-clip-text pt-0.5 text-center font-['Noto_Sans',sans-serif] text-[90px] font-black leading-[120px] tracking-[-4.900px] text-transparent [word-spacing:6px]">
          Upcoming Events
        </h1>
        <section className="grid grid-cols-3 items-start gap-[60px] pl-[60px] pr-[59px]">
          {events.map((event) => (
            <EventCard key={event.title} event={event} />
          ))}
        </section>
      </main>
      <Taskbar />
    </div>
  );
}
